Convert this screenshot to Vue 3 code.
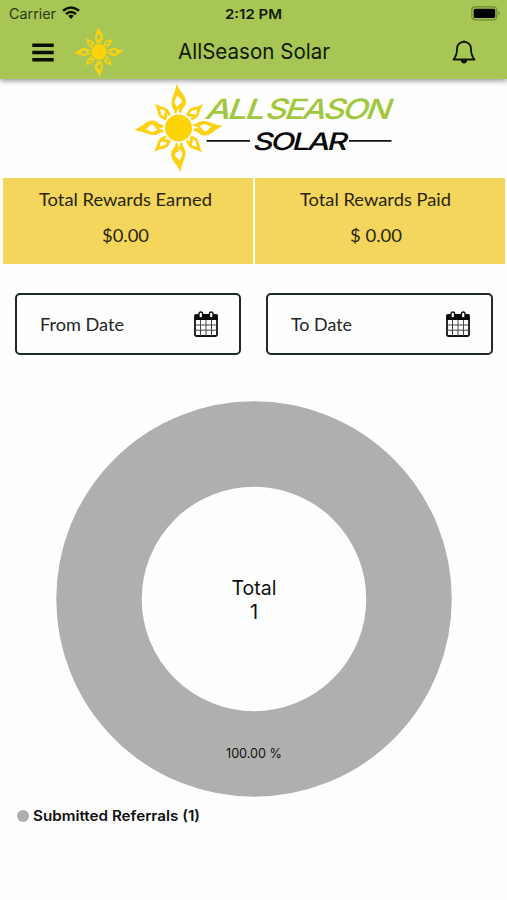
<script setup>
const rewards = [
  { label: 'Total Rewards Earned', value: '$0.00', lw: 173, vw: 47 },
  { label: 'Total Rewards Paid', value: '$ 0.00', lw: 151, vw: 52 },
]
const dates = [
  { label: 'From Date', w: 84 },
  { label: 'To Date', w: 61 },
]
const longRays = [0, 90, 180, 270]
const shortRays = [45, 135, 225, 315]
</script>

<template>
  <div class="screen">
    <svg class="defs" width="0" height="0" aria-hidden="true">
      <symbol id="sun" viewBox="-46 -46 92 92">
        <circle r="13.5" fill="#fdd406" />
        <g fill="#fdd010" fill-rule="evenodd">
          <path v-for="r in longRays" :key="r" :transform="`rotate(${r})`"
            d="M-2 -44.500C1 -36 7.500 -33 7.500 -26C7.500 -21 3.500 -20.500 3.500 -17.500L2.500 -14.800C-.5 -15.500 -.5 -18.500 1 -20.500C-1 -20 -1.500 -17 -2 -14.800L-4 -14.800C-3.500 -19 -7.500 -20 -7 -25.500C-6.500 -31 -3 -36 -2 -44.500ZM-1 -33C-2 -29.500 -4.500 -28 -3.500 -24.500C-3 -22.500 -2 -21.500 -1 -21C-1 -24 3.500 -24 3.500 -27C3 -29.500 0 -30 -1 -33Z" />
          <path v-for="r in shortRays" :key="r" :transform="`rotate(${r})`"
            d="M.5 -35C1.500 -28 5.500 -25.500 5.500 -20.500C5.500 -17.500 4 -16.500 4 -14.500L1.500 -15.200L3 -18.500L-1 -15.200L-4.500 -14.500C-3.500 -17 -5.500 -18 -5.500 -21C-5 -25.500 -.5 -28 .5 -35ZM0 -26.500C-.8 -23 -3.500 -22.500 -2.800 -20L-1.700 -18C-1 -20.500 2.500 -20.500 2.500 -22C2.500 -24 1 -24.500 0 -26.500Z" />
        </g>
      </symbol>
    </svg>

    <header class="top">
      <div class="status">
        <div class="carrier">
          <svg width="48" height="18"><text x="0" y="14" font-size="14" textLength="47" lengthAdjust="spacingAndGlyphs">Carrier</text></svg>
          <svg class="wifi" width="18" height="14" viewBox="0 0 18 14" fill="none" stroke="#081200" stroke-width="2.500">
            <path d="M1 4.800Q9 -1.800 17 4.800M4 8Q9 4 14 8" />
            <path d="M6.200 9.800Q9 7.600 11.800 9.800L9 13Z" fill="#081200" stroke="none" />
          </svg>
        </div>
        <svg class="clock" width="58" height="18"><text x="0" y="13.500" font-size="13.500" font-weight="600" textLength="57" lengthAdjust="spacingAndGlyphs">2:12 PM</text></svg>
        <svg class="battery" width="30" height="15" viewBox="0 0 30 15">
          <rect x=".8" y=".8" width="25" height="13" rx="3.500" fill="none" stroke="#6f8a32" stroke-width="1.200" />
          <rect x="2.700" y="2.700" width="21.500" height="9.200" rx="1.500" fill="#000" />
          <path d="M27.300 5Q30 7.300 27.300 9.600Z" fill="#6f8a32" />
        </svg>
      </div>
      <div class="nav">
        <svg class="menu" width="22" height="19" viewBox="0 0 22 19" stroke="#080f00" stroke-width="3.400" stroke-linecap="square">
          <path d="M2 2.200H20M2 9.500H20M2 16.800H20" />
        </svg>
        <svg class="mini-sun" width="52" height="52"><use href="#sun" /></svg>
        <svg class="title" width="156" height="32"><text x="1" y="23" font-size="21.500" textLength="152" lengthAdjust="spacingAndGlyphs">AllSeason Solar</text></svg>
        <svg class="bell" width="24" height="26" viewBox="0 0 24 26" fill="none" stroke="#0b1500" stroke-width="1.800" stroke-linejoin="round">
          <path d="M12 2.800C7.500 2.800 5 5.800 5 10C5 16.500 3.500 18 1.500 20.500H22.500C20.500 18 19 16.500 19 10C19 5.800 16.500 2.800 12 2.800Z" />
          <path d="M10.500 2.500Q12 0 13.500 2.500ZM8.700 21Q9.300 24.500 12 24.500T15.300 21Z" fill="#0b1500" stroke="none" />
        </svg>
      </div>
    </header>

    <div class="brand">
      <svg width="270" height="98" viewBox="130 80 270 98">
        <use href="#sun" x="132.500" y="82" width="92" height="92" />
        <g font-family="Inter, sans-serif">
          <g transform="translate(204 118.800) skewX(-20)" fill="#a0c83c">
            <text class="tight" font-size="28" font-weight="500" textLength="57" lengthAdjust="spacingAndGlyphs">ALL</text>
            <text class="tight" x="60" font-size="28" font-weight="500" textLength="123" lengthAdjust="spacingAndGlyphs">SEASON</text>
          </g>
          <text class="tight" transform="translate(252 149.500) skewX(-14)" font-size="24" font-weight="500" fill="#080808" textLength="92" lengthAdjust="spacingAndGlyphs">SOLAR</text>
        </g>
        <path d="M206.500 140.800H250M349 140.800H391.500" stroke="#111" stroke-width="1.800" />
      </svg>
    </div>

    <section class="rewards">
      <div v-for="r in rewards" :key="r.label" class="reward">
        <svg :width="r.lw" height="24"><text x="0" y="18.500" font-size="18" :textLength="r.lw" lengthAdjust="spacingAndGlyphs">{{ r.label }}</text></svg>
        <svg :width="r.vw" height="24"><text x="0" y="19" font-size="18" :textLength="r.vw" lengthAdjust="spacingAndGlyphs">{{ r.value }}</text></svg>
      </div>
    </section>

    <section class="dates">
      <div v-for="d in dates" :key="d.label" class="date">
        <svg :width="d.w" height="24"><text x="0" y="18.500" font-size="18" :textLength="d.w" lengthAdjust="spacingAndGlyphs">{{ d.label }}</text></svg>
        <svg class="calendar" width="24" height="26" viewBox="0 0 24 26">
          <rect x="1" y="4" width="22" height="21" rx="1.500" fill="#fff" stroke="#111" stroke-width="1.800" />
          <path d="M.5 3.500H23.500V9H.5Z" fill="#080808" />
          <path d="M6.500 9V25M12 9V25M17.500 9V25M1 14H23M1 19.200H23" stroke="#444" />
          <rect x="5" y="1" width="3.600" height="6" rx="1.800" fill="#fff" stroke="#111" stroke-width="1.400" />
          <rect x="15.400" y="1" width="3.600" height="6" rx="1.800" fill="#fff" stroke="#111" stroke-width="1.400" />
        </svg>
      </div>
    </section>

    <section class="chart">
      <svg width="396" height="396" viewBox="0 0 396 396">
        <circle cx="198" cy="198" r="155" fill="none" stroke="#b0afae" stroke-width="85.500" />
        <g fill="#111">
          <text x="175.500" y="193.500" font-size="20" textLength="45" lengthAdjust="spacingAndGlyphs">Total</text>
          <text x="198" y="218" font-size="20" text-anchor="middle">1</text>
          <text x="170" y="357" font-size="13" textLength="56" lengthAdjust="spacingAndGlyphs">100.00 %</text>
        </g>
      </svg>
    </section>

    <div class="legend">
      <span class="dot"></span>
      <svg width="168" height="20"><text x="0" y="15" font-size="14.500" font-weight="600" textLength="167" lengthAdjust="spacingAndGlyphs">Submitted Referrals (1)</text></svg>
    </div>
  </div>
</template>

<style>
body { margin: 0; background: #fefefe; }
</style>
<style scoped>
.screen { width: 507px; height: 900px; overflow: hidden; background: #fefefe; font-family: Inter, sans-serif; color: #111; }
svg { display: block; flex: none; overflow: visible; }
text { fill: currentColor; }
.brand text { fill: inherit; }
.brand text[fill] { fill: #080808; }
.tight { letter-spacing: -2px; }
.defs { height: 0; }
.top { height: 79px; background: #a7c655; box-shadow: 0 2px 5px rgba(0, 0, 0, .4); color: #111a05; }
.status { height: 27px; display: grid; grid-template-columns: 1fr 58px 1fr; align-items: center; }
.carrier { display: flex; align-items: center; gap: 5px; padding-left: 9px; }
.carrier text { fill: #2c3911; }
.wifi { margin-bottom: 2px; }
.battery { justify-self: end; margin-right: 6px; }
.nav { height: 50px; display: flex; align-items: center; padding: 0 31px 0 32px; }
.mini-sun { margin-left: 19px; }
.title { margin-left: 52px; }
.bell { margin-left: auto; }
.brand { height: 99px; padding-left: 130px; padding-top: 1px; box-sizing: border-box; }
.rewards { display: grid; grid-template-columns: 249.500px 250.500px; gap: 2px; height: 86px; padding: 0 2px 0 3px; }
.reward { box-sizing: border-box; background: #f3d65b; display: flex; flex-direction: column; align-items: center; gap: 12px; padding: 9px 4px 0 0; color: #29250e; font-family: Lato, sans-serif; }
.reward + .reward { padding-right: 8px; }
.dates { display: grid; grid-template-columns: 226px 227px; gap: 25px; padding: 29px 0 0 15px; }
.date { height: 62px; box-sizing: border-box; border: 2px solid #202a29; border-radius: 5px; display: flex; align-items: center; justify-content: space-between; padding: 0 21px 0 23px; font-family: Lato, sans-serif; color: #252525; }
.chart { padding: 46px 0 0 56px; }
.legend { display: flex; align-items: center; gap: 4px; padding: 9px 0 0 17px; }
.dot { width: 12px; height: 12px; border-radius: 50%; background: #b0afae; }
</style>
